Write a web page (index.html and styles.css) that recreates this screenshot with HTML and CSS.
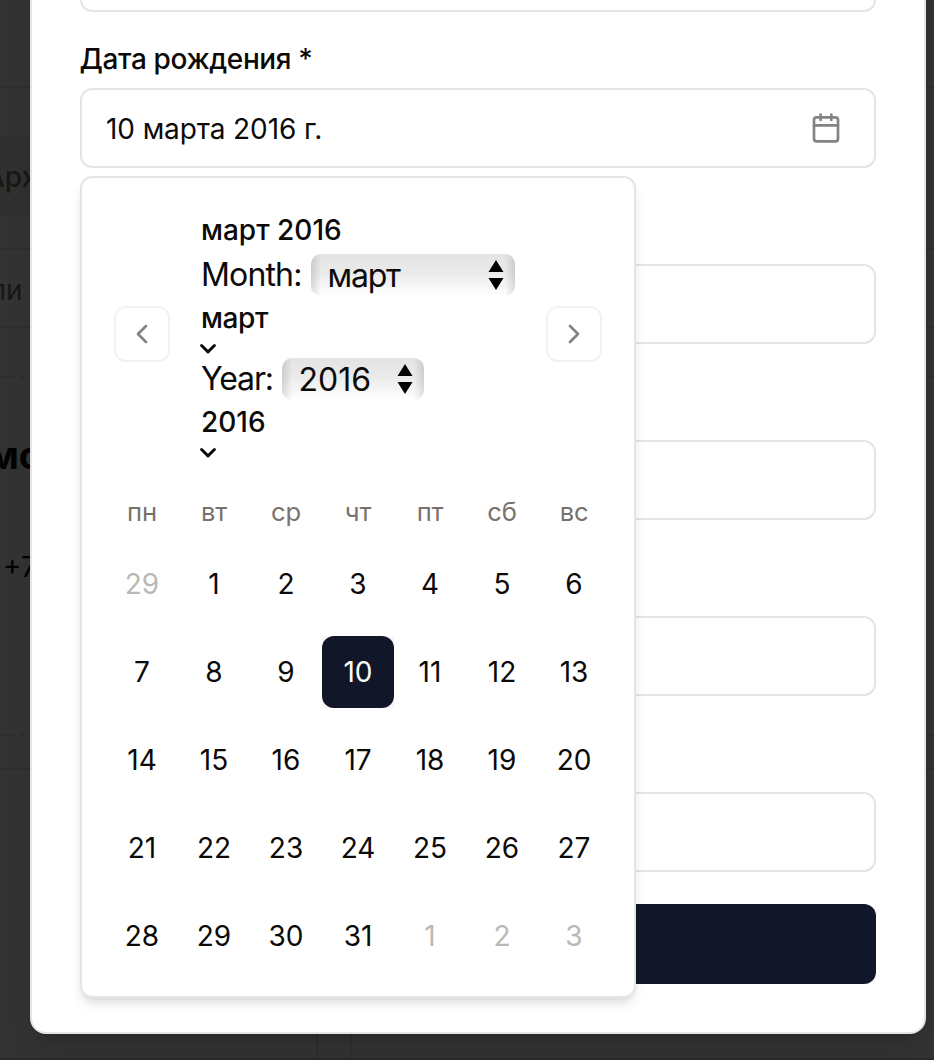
FILE: index.html
```html
<!DOCTYPE html>
<html lang="ru">
<head>
<meta charset="utf-8">
<title>Дата рождения</title>
<link rel="stylesheet" href="styles.css">
</head>
<body>
<div class="page">
  <div class="row row-top"></div>
  <div class="row row-tab">Арх</div>
  <div class="row row-gap"></div>
  <div class="row row-search">ли</div>
  <div class="row row-space"></div>
  <div class="row row-card"><div class="name">мс</div><div class="phone">+7</div></div>
  <div class="row row-foot"></div>
  <div class="row row-end"><div class="col-a"></div><div class="col-b"></div></div>
</div>
<div class="dialog">
  <div class="field field-prev"></div>
  <div class="label">Дата рождения *</div>
  <div class="field date-field"><span>10 марта 2016 г.</span>
    <svg class="icon" viewBox="0 0 24 24"><path d="M8 2v4M16 2v4M3 10h18"/><rect x="3" y="4" width="18" height="18" rx="2"/></svg>
  </div>
  <div class="field"></div>
  <div class="field"></div>
  <div class="field"></div>
  <div class="field"></div>
  <div class="submit"></div>
  <div class="popover">
    <div class="caption">
      <div class="nav"><svg class="icon" viewBox="0 0 24 24"><path d="m15 18-6-6 6-6"/></svg></div>
      <div class="dropdowns">
        <div class="cap">март 2016</div>
        <div class="pick"><span class="pick-label month-label">Month:</span><div class="select month"><span class="tight">март</span><svg class="arrows" viewBox="0 0 16 30"><path d="M8 0l7.5 12H.5zM8 30l7.5-12H.5z"/></svg></div></div>
        <div class="cap cap-month">март</div>
        <svg class="chev" viewBox="0 0 120 120"><path d="M12 56l48 48 48-48"/></svg>
        <div class="pick"><span class="pick-label year-label">Year:</span><div class="select year"><span>2016</span><svg class="arrows" viewBox="0 0 16 30"><path d="M8 0l7.5 12H.5zM8 30l7.5-12H.5z"/></svg></div></div>
        <div class="cap">2016</div>
        <svg class="chev" viewBox="0 0 120 120"><path d="M12 56l48 48 48-48"/></svg>
      </div>
      <div class="nav"><svg class="icon" viewBox="0 0 24 24"><path d="m9 18 6-6-6-6"/></svg></div>
    </div>
    <div class="week head"><span>пн</span><span>вт</span><span>ср</span><span>чт</span><span>пт</span><span>сб</span><span>вс</span></div>
    <div class="week"><span class="out">29</span><span>1</span><span>2</span><span>3</span><span>4</span><span>5</span><span>6</span></div>
    <div class="week"><span>7</span><span>8</span><span>9</span><span class="sel"><b>10</b></span><span>11</span><span>12</span><span>13</span></div>
    <div class="week"><span>14</span><span>15</span><span>16</span><span>17</span><span>18</span><span>19</span><span>20</span></div>
    <div class="week"><span>21</span><span>22</span><span>23</span><span>24</span><span>25</span><span>26</span><span>27</span></div>
    <div class="week"><span>28</span><span>29</span><span>30</span><span>31</span><span class="out">1</span><span class="out">2</span><span class="out">3</span></div>
  </div>
</div>
</body>
</html>
```
FILE: styles.css
```css
* { box-sizing: border-box; }
body { margin: 0; width: 934px; height: 1060px; overflow: hidden; position: relative; background: #333; font-family: Inter, sans-serif; font-size: 28px; color: #0c0a09; }
.page { display: flex; flex-direction: column; height: 1060px; }
.row { flex: none; }
.row-top { height: 136px; background: linear-gradient(#2e2e2e, #2e2e2e) 0 86px / 100% 2px no-repeat; }
.row-tab { width: 60px; height: 80px; background: #303030; color: #181716; font-weight: 500; line-height: 82px; text-indent: -15px; }
.row-gap { height: 32px; }
.row-search { height: 80px; border: solid #2e2e2e; border-width: 2px 0; color: #181716; line-height: 80px; text-indent: -10px; }
.row-space { height: 48px; }
.row-card { height: 360px; border: dashed #2e2e2e; border-width: 2px 0; color: #020202; display: flex; flex-direction: column; }
.name { font-size: 38px; font-weight: 700; line-height: 44px; margin: 55px 0 0 -12px; }
.phone { line-height: 40px; margin: 70px 0 0 3px; }
.row-foot { height: 34px; border-bottom: 2px solid #2e2e2e; }
.row-end { height: 290px; display: flex; gap: 32px; border-bottom: 2px solid #2a2829; }
.col-a { width: 318px; border-right: 2px solid #2d2d2d; }
.col-b { flex: 1; border-left: 2px solid #2d2d2d; }
.dialog { position: absolute; left: 30px; top: -70px; width: 896px; height: 1104px; padding: 0 48px; background: #fff; border: 2px solid #e5e5e5; border-radius: 16px; box-shadow: 0 20px 30px -6px rgba(0,0,0,.12), 0 8px 12px -8px rgba(0,0,0,.12); }
.field { height: 80px; margin-bottom: 96px; border: 2px solid #e5e5e5; border-radius: 12px; }
.field-prev { margin: 0 0 32px; }
.label { height: 28px; margin-bottom: 16px; line-height: 30px; font-weight: 500; letter-spacing: -.38px; text-indent: -.5px; }
.date-field { display: flex; align-items: center; justify-content: space-between; padding: 0 32px 0 24px; letter-spacing: -.1px; }
.date-field span { padding-top: 1px; }
.icon { width: 32px; height: 32px; fill: none; stroke: #0c0a09; stroke-width: 2; stroke-linecap: round; stroke-linejoin: round; opacity: .5; }
.submit { height: 80px; margin-top: -64px; border-radius: 12px; background: #111628; }
.popover { position: absolute; left: 48px; top: 244px; width: 556px; height: 822px; padding: 24px; background: #fff; border: 2px solid #e5e5e5; border-radius: 12px; box-shadow: 0 8px 12px -2px rgba(0,0,0,.1), 0 4px 8px -4px rgba(0,0,0,.1); }
.caption { display: flex; align-items: center; justify-content: space-between; padding: 8px 8px 0; margin-bottom: 32px; }
.nav { width: 56px; height: 56px; display: flex; align-items: center; justify-content: center; border: 2px solid #f2f2f2; border-radius: 12px; }
.dropdowns { width: 314px; display: flex; flex-direction: column; }
.cap { height: 40px; line-height: 41px; font-weight: 500; }
.cap-month { letter-spacing: -.4px; }
.pick { height: 48px; padding-top: 2px; display: flex; align-items: center; }
.pick-label { font-size: 32px; line-height: 46px; white-space: nowrap; letter-spacing: -.85px; }
.month-label { width: 110px; }
.year-label { width: 81px; letter-spacing: -1.1px; }
.tight { letter-spacing: -1.2px; }
.select { height: 42px; display: flex; align-items: center; justify-content: space-between; padding: 0 11px 0 16.5px; border-radius: 10px; font-size: 32px; background: linear-gradient(90deg, rgba(0,0,0,.12), transparent 10px, transparent calc(100% - 10px), rgba(0,0,0,.12)), linear-gradient(#e4e4e4, #eaeaea 45%, #fff); }
.month { width: 204px; }
.year { width: 142px; }
.arrows { width: 16px; height: 30px; }
.chev { width: 16px; height: 16px; margin-left: -1px; fill: none; stroke: #0c0a09; stroke-width: 22; stroke-linecap: round; stroke-linejoin: round; }
.week { display: flex; margin-top: 16px; }
.week span { width: 72px; height: 72px; line-height: 73px; text-align: center; }
.head { margin: 0; }
.head span { height: 42px; line-height: 43px; font-size: 25.6px; letter-spacing: -.2px; color: #78716c; }
.week .out { color: #bbb8b5; }
.week .sel { background: #f6f6f5; }
.sel b { display: block; height: 72px; font-weight: 400; color: #fafaf9; background: #111628; border-radius: 12px; }
```
